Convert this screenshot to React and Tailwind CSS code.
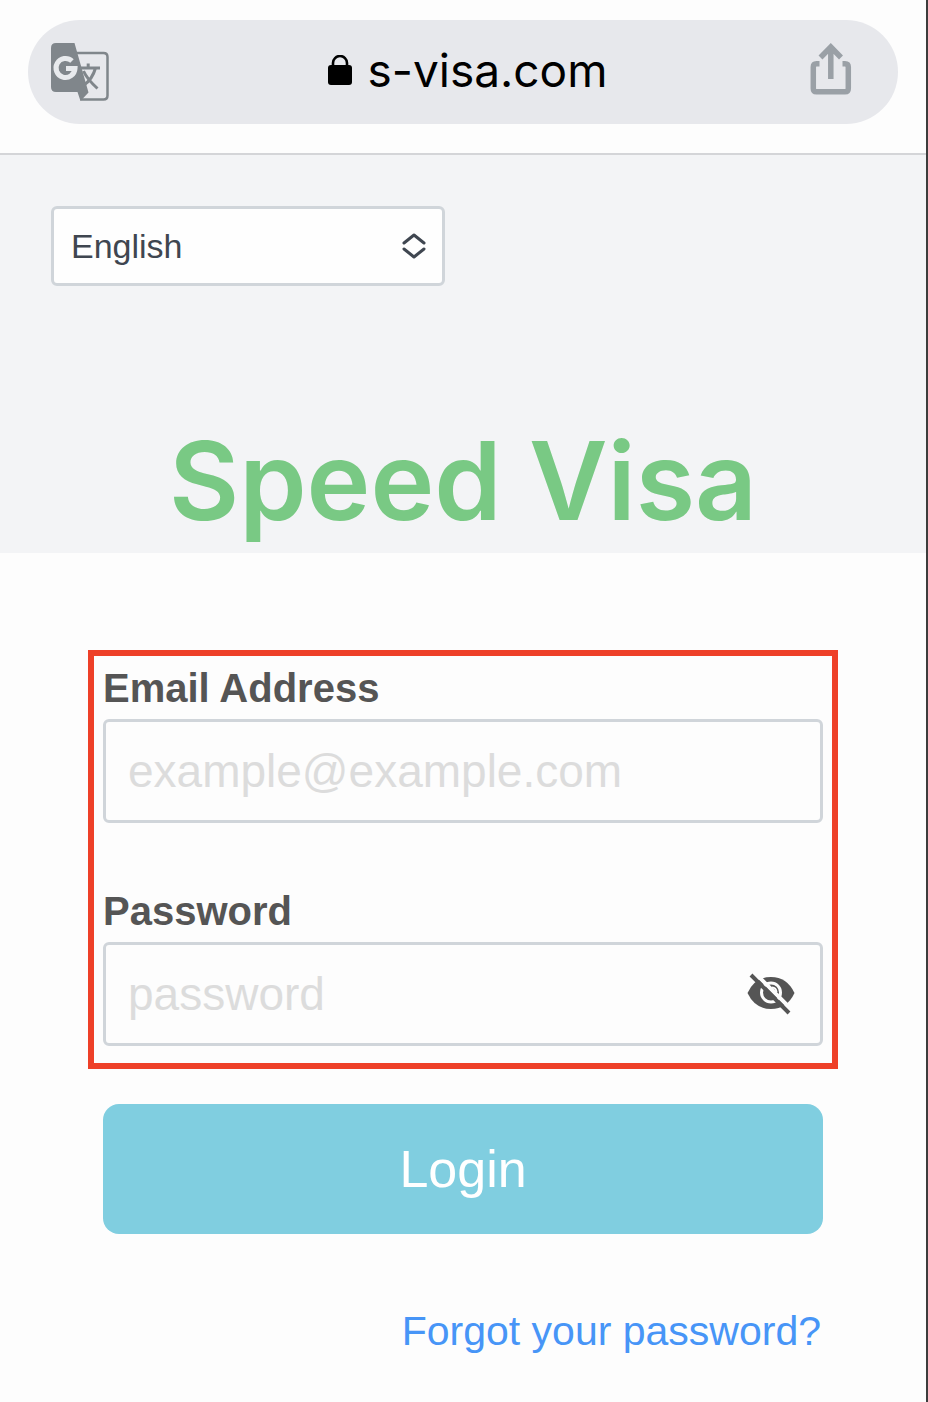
import { useState } from 'react';

function TranslateIcon() {
  return (
    <svg viewBox="0 0 58 58" className="size-[58px]" aria-hidden="true">
      <path d="M26 10 H52.500 Q56.500 10 56.500 14 V52.500 Q56.500 56.500 52.500 56.500 H29.500" fill="none" stroke="#80868b" strokeWidth="2.500" />
      <path d="M5 0 H23.500 L37.500 49.500 L29.500 58 L26.500 49 H5 Q0 49 0 44 V5 Q0 0 5 0 Z" fill="#80868b" />
      <path d="M21 18 A9.500 9.500 0 1 0 24 25.500 H15" fill="none" stroke="#e8eaed" strokeWidth="5" />
      <path d="M30 25 H49 M37.200 20.500 V25 M44.500 25 Q41.500 36 33 42 M32.500 28 Q36 36 46.500 45.500" fill="none" stroke="#80868b" strokeWidth="3" />
    </svg>
  );
}

function LockIcon() {
  return (
    <svg viewBox="0 0 24 30" className="h-[30px] w-6" aria-hidden="true">
      <rect x="0" y="10" width="24" height="20" rx="3" />
      <path d="M5 12 V8 A7 7 0 0 1 19 8 V12" fill="none" stroke="#000" strokeWidth="2.600" />
    </svg>
  );
}

function ShareIcon() {
  return (
    <svg viewBox="0 0 42 52" className="h-[52px] w-[42px]" fill="none" stroke="#9aa0a6" strokeWidth="5.500" aria-hidden="true">
      <path d="M9.500 20.700 H6.500 Q3.300 20.700 3.300 24 V45.500 Q3.300 48.800 6.500 48.800 H35 Q38.300 48.800 38.300 45.500 V24 Q38.300 20.700 35 20.700 H32.500" />
      <path d="M20.800 36 V4 M10.500 14.500 L20.800 4 L31 14.500" />
    </svg>
  );
}

function SelectArrows() {
  return (
    <svg viewBox="0 0 24 28" className="pointer-events-none absolute top-1/2 right-[19px] h-7 w-6 -translate-y-1/2" fill="none" stroke="#3f4650" strokeWidth="3" strokeLinecap="round" strokeLinejoin="round" aria-hidden="true">
      <path d="M2 11 L12 3 L22 11 M2 17 L12 25 L22 17" />
    </svg>
  );
}

function EyeOffIcon() {
  return (
    <svg viewBox="0 0 48 42" className="h-[42px] w-12" aria-hidden="true">
      <path d="M0.500 20 Q8 4 24 4 Q40 4 47.500 20 Q40 36 24 36 Q8 36 0.500 20 Z" fill="#555" />
      <circle cx="24" cy="19.500" r="9.500" fill="none" stroke="#fdfdfd" strokeWidth="3" />
      <path d="M25 14.500 A5 5 0 0 1 29.500 19" fill="none" stroke="#fdfdfd" strokeWidth="2" />
      <path d="M6.500 -1.500 L46 38" fill="none" stroke="#fdfdfd" strokeWidth="4" />
      <path d="M4 2 L42 40" fill="none" stroke="#555" strokeWidth="4" />
    </svg>
  );
}

export default function App() {
  const [showPassword, setShowPassword] = useState(false);

  return (
    <div className="min-h-screen border-r-2 border-[#3c3c3c] bg-[#fdfdfd] font-['Liberation_Sans',Arial,sans-serif]">
      <header className="border-b-2 border-[#d4d5d8] px-7 pt-5 pb-[29px]">
        <div className="flex h-[104px] items-center rounded-full bg-[#e7e8ec] pr-[46px] pl-[23px]">
          <button type="button" aria-label="Translate"><TranslateIcon /></button>
          <div className="flex flex-1 items-center justify-center gap-4 pb-1 pl-4 font-['Inter',sans-serif] text-[46px] leading-none text-black">
            <LockIcon />
            <span>s-visa.com</span>
          </div>
          <button type="button" aria-label="Share" className="pb-1.5"><ShareIcon /></button>
        </div>
      </header>

      <section className="bg-[#f3f4f6] px-[51px] pt-[51px] pb-3">
        <div className="relative w-[394px] max-w-full">
          <select aria-label="Language" className="h-[80px] w-full appearance-none rounded-md border-[3px] border-[#d0d5da] bg-[#fefefe] px-[17px] text-[34px] text-[#3f4650]">
            <option>English</option>
          </select>
          <SelectArrows />
        </div>
        <h1 className="mt-[135px] text-center font-['Inter',sans-serif] text-[108px] leading-[120px] font-semibold text-[#79c984]">Speed Visa</h1>
      </section>

      <main className="px-[88px] pt-[97px] pb-10">
        <form onSubmit={(e) => e.preventDefault()}>
          <div className="border-[6px] border-[#ee4028] px-[9px] pt-[9px] pb-[17px]">
            <label htmlFor="email" className="block pb-2 text-[40px] leading-[46px] font-bold text-[#555]">Email Address</label>
            <input
              id="email"
              type="email"
              placeholder="example@example.com"
              className="block h-[104px] w-full rounded-md border-[3px] border-[#d0d5da] px-[22px] text-[46px] text-[#555] placeholder:text-[#dcdcdc]"
            />
            <label htmlFor="password" className="mt-[65px] block pb-2 text-[40px] leading-[46px] font-bold text-[#555]">Password</label>
            <div className="relative">
              <input
                id="password"
                type={showPassword ? 'text' : 'password'}
                placeholder="password"
                className="block h-[104px] w-full rounded-md border-[3px] border-[#d0d5da] pr-24 pl-[22px] text-[46px] text-[#555] placeholder:text-[#dcdcdc]"
              />
              <button
                type="button"
                aria-label="Toggle password visibility"
                onClick={() => setShowPassword(!showPassword)}
                className="absolute top-1/2 right-7 -translate-y-1/2"
              >
                <EyeOffIcon />
              </button>
            </div>
          </div>
          <div className="px-[15px]">
            <button type="submit" className="mt-[35px] h-[130px] w-full rounded-2xl bg-[#80cee0] text-[52px] text-white">Login</button>
            <div className="mt-[70px] pr-0.5 text-right">
              <a href="#forgot" className="text-[41px] leading-[54px] text-[#4795f7]">Forgot your password?</a>
            </div>
          </div>
        </form>
      </main>
    </div>
  );
}
